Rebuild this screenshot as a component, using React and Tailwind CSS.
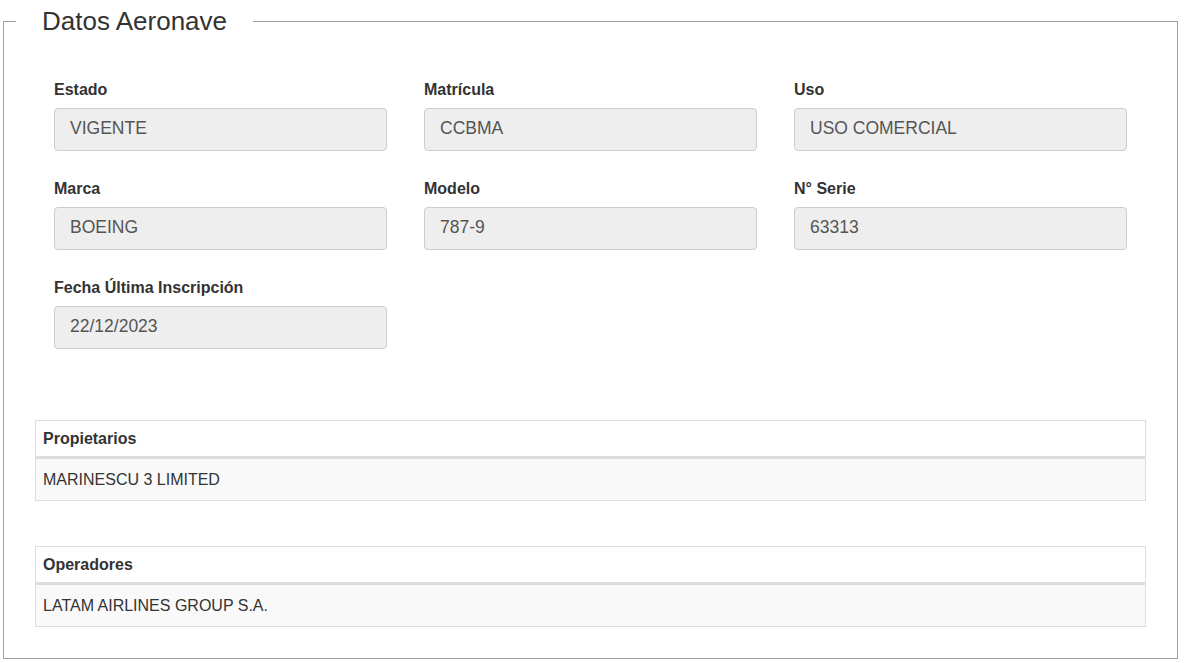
import React from 'react';

const fields = [
  { label: 'Estado', value: 'VIGENTE' },
  { label: 'Matrícula', value: 'CCBMA' },
  { label: 'Uso', value: 'USO COMERCIAL' },
  { label: 'Marca', value: 'BOEING' },
  { label: 'Modelo', value: '787-9' },
  { label: 'N° Serie', value: '63313' },
  { label: 'Fecha Última Inscripción', value: '22/12/2023' },
];

const Field = ({ label, value }) => (
  <div className="mb-[26px]">
    <div className="h-[23px] mb-[7px] flex items-center text-[16px] font-bold text-[#333]">
      {label}
    </div>
    <div className="h-[43px] flex items-center pb-[2px] px-[15px] bg-[#eeeeee] border border-[#cccccc] rounded-[4px] text-[17.5px] text-[#555]">
      {value}
    </div>
  </div>
);

const DataTable = ({ title, rows }) => (
  <div className="mx-[19px] border border-[#dddddd] text-[16px] text-[#333]">
    <div className="h-[37px] flex items-center px-[7px] font-bold border-b-2 border-[#dddddd]">
      {title}
    </div>
    {rows.map((row) => (
      <div key={row} className="h-[42px] flex items-center px-[7px] border-t border-[#dddddd] bg-[#f9f9f9]">
        {row}
      </div>
    ))}
  </div>
);

const App = () => {
  return (
    <div
      className="min-h-screen bg-white pt-[6px]"
      style={{ fontFamily: '"Liberation Sans", Arial, sans-serif' }}
    >
      <fieldset className="ml-[3px] w-[1175px] border border-[#a0a0a0] px-[12px] pt-[42px] pb-[31px]">
        <legend className="px-[26px] text-[26px] leading-[30px] text-[#333]">Datos Aeronave</legend>

        <div className="ml-[38px] grid grid-cols-[333px_333px_333px] gap-x-[37px]">
          {fields.map((f) => (
            <Field key={f.label} label={f.label} value={f.value} />
          ))}
        </div>

        <div className="mt-[45px]">
          <DataTable title="Propietarios" rows={['MARINESCU 3 LIMITED']} />
        </div>
        <div className="mt-[45px]">
          <DataTable title="Operadores" rows={['LATAM AIRLINES GROUP S.A.']} />
        </div>
      </fieldset>
    </div>
  );
};

export default App;
